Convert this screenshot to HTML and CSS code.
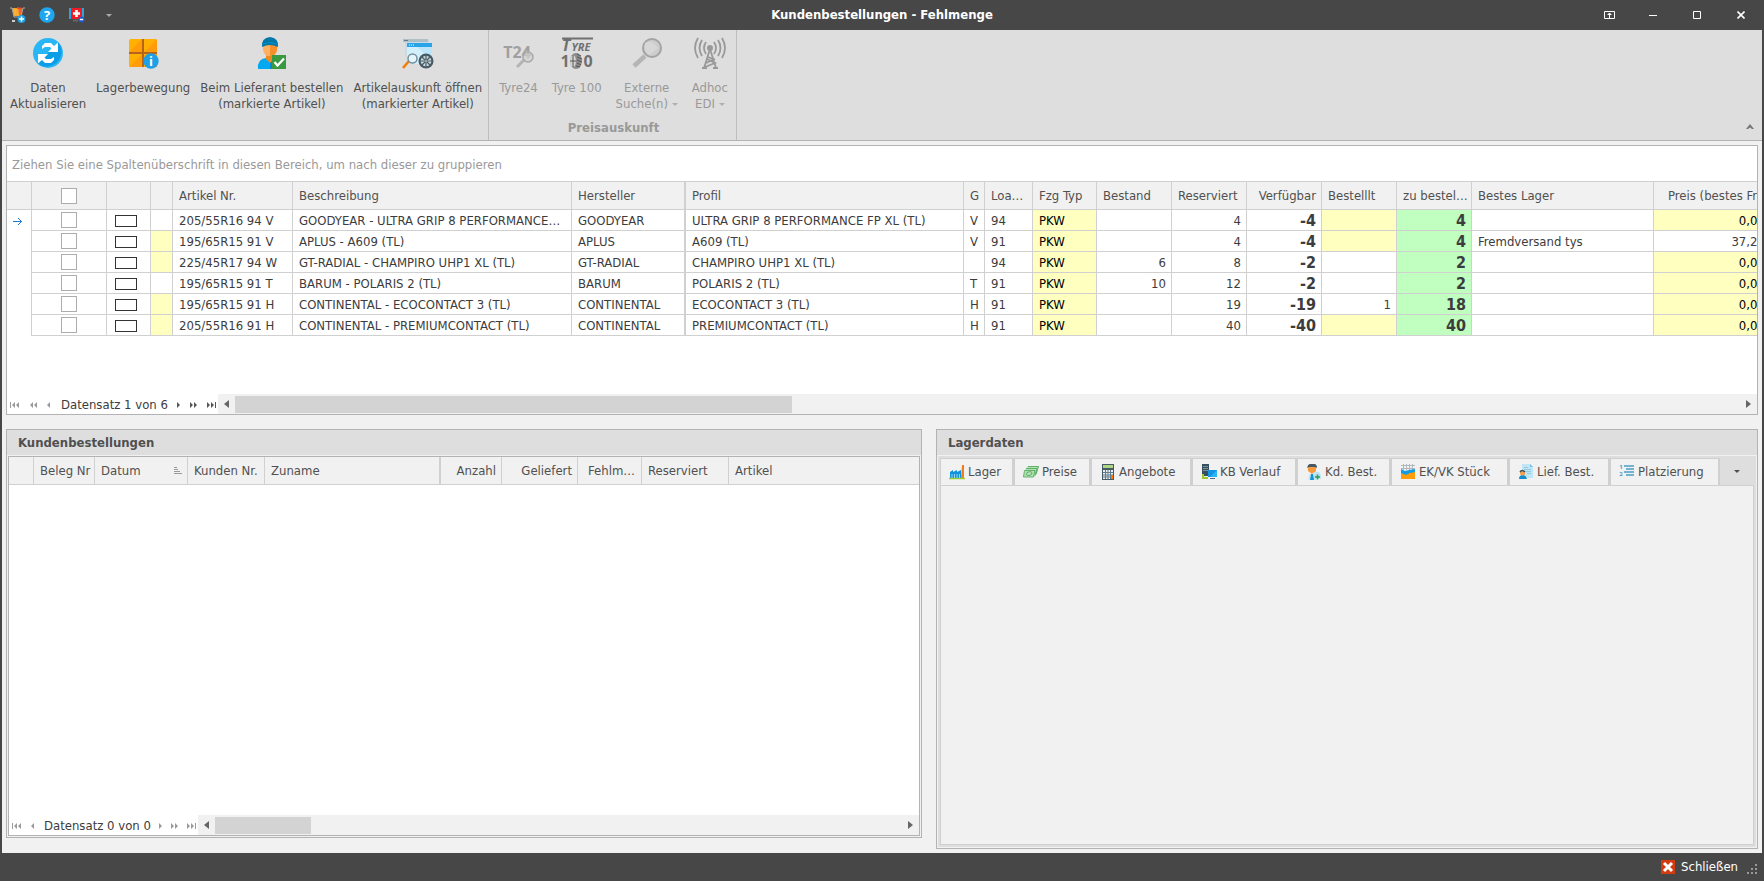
FILE: index.html
```html
<!DOCTYPE html>
<html lang="de">
<head>
    <meta charset="UTF-8">
    <meta name="viewport" content="width=device-width, initial-scale=1.0">
    <title>Kundenbestellungen - Fehlmenge</title>
    <link rel="stylesheet" href="styles.css">
</head>
<body>
    <header class="titlebar">
        <div class="quick-access">
            <button type="button" aria-label="Warenkorb">
                <svg width="16" height="16" viewBox="0 0 16 16"><path d="M2 1h10l-2 8H4z" fill="#f5a01a"/><path d="M7 0l6 1-1 7H9z" fill="#e8481c"/><path d="M3 3h9M3 5h8M4 7h7M5 2v7M8 2v7" stroke="#ffc95a" stroke-width=".5"/><path d="M0 1h2l2 9h6M15 1h-2l-2 8" stroke="#aaa" fill="none"/><path d="M2 14h3" stroke="#ccc" stroke-width="2"/><circle cx="11.500" cy="12" r="4" fill="#1ba1e6"/><path d="M9 12h5M11.500 9.500v5" stroke="#fff" stroke-width="1.500"/></svg>
            </button>
            <button type="button" aria-label="Hilfe">
                <svg width="16" height="16" viewBox="0 0 16 16"><circle cx="8" cy="8" r="7.700" fill="#1ea7ee"/><text x="8" y="13" class="glyph" font-size="13" fill="#fff">?</text></svg>
            </button>
            <button type="button" aria-label="Fernwartung">
                <svg width="17" height="16" viewBox="0 0 17 16"><rect x="1" y="1" width="15" height="11" fill="#2aa3e0"/><rect x="3" y="1" width="11" height="11" fill="#f01c24"/><path d="M8.500 3v7M5 6.500h7" stroke="#fff" stroke-width="2.600"/><path d="M5 13.500h5" stroke="#666" stroke-width="2"/><circle cx="13.500" cy="12.500" r="3" fill="#2458c8"/><path d="M11.800 12.500h3.400" stroke="#fff" stroke-width="1.400"/></svg>
            </button>
            <button type="button" class="quick-more" aria-label="Symbolleiste anpassen"><i class="arrow-down"></i></button>
        </div>
        <h1>Kundenbestellungen - Fehlmenge</h1>
        <div class="window-buttons">
            <button type="button" aria-label="Menüband anzeigen"><svg width="11" height="8" viewBox="0 0 11 8"><path d="M.5.5h10v7H.5zM5.500 7V3M3.500 3.500h4M4.500 2.500h2" fill="none" stroke="#fff"/></svg></button>
            <button type="button" aria-label="Minimieren"><svg width="8" height="8" viewBox="0 0 8 8"><path d="M0 4.500h8" stroke="#fff"/></svg></button>
            <button type="button" aria-label="Maximieren"><svg width="8" height="8" viewBox="0 0 8 8"><path d="M.5.500h7v7h-7z" fill="none" stroke="#fff"/></svg></button>
            <button type="button" aria-label="Schließen"><svg width="8" height="8" viewBox="0 0 8 8"><path d="M.5.500l7 7M7.500.500l-7 7" stroke="#fff" stroke-width="1.600"/></svg></button>
        </div>
    </header>

    <div class="ribbon">
        <div class="ribbon-group">
            <div class="ribbon-items">
                <button type="button">
                    <svg width="32" height="32" viewBox="0 0 32 32"><circle cx="16" cy="16" r="15" fill="#29b6f6"/><path d="M26.500 5.500A15 15 0 0 1 5.500 26.500z" fill="#0d9de6"/><path d="M10 12V9l3-3h6l3 3 4-3.500v9.500H16l3.500-3.500-1.500-1.500h-5z" fill="#fff"/><path d="M22 20v3l-3 3h-6l-3-3-4 3.500V17h10l-3.500 3.500 1.500 1.500h5z" fill="#fff"/></svg>
                    <span>Daten<br>Aktualisieren</span>
                </button>
                <button type="button">
                    <svg width="32" height="32" viewBox="0 0 32 32"><rect x="2" y="2" width="28" height="28" rx="2" fill="#ffb000"/><path d="M15 2v13H2zM30 2v13H17zM15 17v13H2zM30 17v13H17z" fill="#ff9c07"/><path d="M16 2v28M2 16h28" stroke="#b5641c" stroke-width="2"/><circle cx="24" cy="24" r="7.700" fill="#1e9fe8"/><text x="24" y="29" class="glyph" font-size="13" fill="#fff">i</text></svg>
                    <span>Lagerbewegung</span>
                </button>
                <button type="button">
                    <svg width="32" height="32" viewBox="0 0 32 32"><path d="M2 32q-1-10 8-11l4 3 4-3q7 0 8 6v5z" fill="#03a9f0"/><path d="M14 24l4-3q7 0 8 6v5H14z" fill="#0288d1"/><path d="M10 17h8v5l-4 4-4-4z" fill="#f08a20"/><path d="M7 8h14q1 8-4 11h-6Q6 16 7 8z" fill="#ffb060"/><path d="M14 8h7q1 8-4 11h-3z" fill="#f7902a"/><path d="M6 10Q5 1 14 0q9 1 8 10-8-4-16 0z" fill="#0277a8"/><path d="M7 7q7-3 14 0" stroke="#0091c9" fill="none"/><rect x="16" y="18" width="14" height="14" fill="#3a9a42"/><path d="M18.500 25l3 3.500 6.500-7" fill="none" stroke="#fff" stroke-width="2.200"/></svg>
                    <span>Beim Lieferant bestellen<br>(markierte Artikel)</span>
                </button>
                <button type="button">
                    <svg width="32" height="32" viewBox="0 0 32 32"><path d="M1 2h26v18H3V5H1z" fill="#c9dce5"/><path d="M1 2h25v3H1z" fill="#aebfc8"/><path d="M2 3.500h4" stroke="#607d8b"/><rect x="5" y="6" width="25" height="21" fill="#d2effc"/><path d="M5 6h25v4H5z" fill="#2aa3e8"/><path d="M7 8h5" stroke="#fff" stroke-dasharray="1 1"/><path d="M15 10h15v14z" fill="#bde5f8"/><path d="M1 31l6-7" stroke="#f57c00" stroke-width="2.600"/><circle cx="10.500" cy="21.500" r="4.500" fill="#e4f5fc" stroke="#78909c" stroke-width="1.500"/><circle cx="24" cy="24" r="7.500" fill="#455a64"/><circle cx="24" cy="24" r="5.300" fill="#cfd8dc"/><path d="M24 18.500v11M18.500 24h11M20 20l8 8M28 20l-8 8" stroke="#455a64" stroke-width="1.200"/><circle cx="24" cy="24" r="1.600" fill="#90a4ae"/></svg>
                    <span>Artikelauskunft öffnen<br>(markierter Artikel)</span>
                </button>
            </div>
        </div>
        <div class="ribbon-group prices">
            <div class="ribbon-items">
                <button type="button" disabled>
                    <svg width="32" height="32" viewBox="0 0 32 32"><text x="15" y="21" class="glyph" font-size="16" fill="#a0a0a0">T24</text><path d="M15 30l7-7" stroke="#b4b4b4" stroke-width="3"/><circle cx="26" cy="20" r="5" fill="#d0d0d0" fill-opacity=".7" stroke="#a8a8a8" stroke-width="1.500"/></svg>
                    <span>Tyre24</span>
                </button>
                <button type="button" disabled>
                    <svg width="32" height="32" viewBox="0 0 32 32"><path d="M1 1.500h31" stroke="#707070" stroke-width="2"/><text x="5" y="14" class="glyph italic" font-size="16" fill="#707070">T</text><text x="20" y="14" class="glyph italic" font-size="11" fill="#707070">YRE</text><text x="4" y="30" class="glyph" font-size="16" fill="#707070">1</text><text x="27" y="30" class="glyph" font-size="16" fill="#707070">0</text><ellipse cx="15" cy="24" rx="6" ry="8" fill="#8c8c8c"/><ellipse cx="12" cy="24" rx="3" ry="6" fill="#d5d5d5"/><path d="M16 17l4 2M16 20l5 2M16 23l5 2M16 26l4 2M15 29l4 1M12 18v12M9 24h6" stroke="#555"/></svg>
                    <span>Tyre 100</span>
                </button>
                <button type="button" disabled>
                    <svg width="32" height="32" viewBox="0 0 32 32"><path d="M3 29l11-10" stroke="#b5b5b5" stroke-width="4.500"/><circle cx="21" cy="11" r="9" fill="#cdcdcd" stroke="#a3a3a3" stroke-width="2"/><path d="M14 6q6-4 13 5-5 3-8 7-7-3-5-12z" fill="#d7d7d7"/></svg>
                    <span>Externe<br>Suche(n) <i class="arrow-down"></i></span>
                </button>
                <button type="button" disabled>
                    <svg width="32" height="32" viewBox="0 0 32 32"><g fill="none" stroke="#999" stroke-width="1.800"><path d="M4 1q-6 10 0 20M8 3q-5 8 0 16M12 5q-4 6 0 12M28 1q6 10 0 20M24 3q5 8 0 16M20 5q4 6 0 12"/><path d="M16 12L10 31M16 12l6 19M13 22l8 4-10 4M19 22l-5-2M8 31h5M19 31h5M12 26l9-4"/></g><circle cx="16" cy="11" r="3" fill="#999"/></svg>
                    <span>Adhoc<br>EDI <i class="arrow-down"></i></span>
                </button>
            </div>
            <div class="ribbon-title">Preisauskunft</div>
        </div>
        <button type="button" class="ribbon-collapse" aria-label="Menüband minimieren"><svg width="8" height="5" viewBox="0 0 8 5"><path d="M0 5l4-5 4 5H6L4 3.500 2 5z" fill="#777"/></svg></button>
    </div>

    <main class="content">
        <section class="grid-panel">
            <div class="group-hint">Ziehen Sie eine Spaltenüberschrift in diesen Bereich, um nach dieser zu gruppieren</div>
            <div class="grid-body">
                <table class="grid articles">
                    <colgroup>
                        <col class="w-ind"><col class="w-75"><col class="w-flag"><col class="w-mark"><col class="w-nr"><col class="w-desc"><col class="w-maker"><col class="w-profile"><col class="w-g"><col class="w-load"><col class="w-type"><col class="w-75"><col class="w-75"><col class="w-75"><col class="w-75"><col class="w-75"><col class="w-stock"><col class="w-price">
                    </colgroup>
                    <thead>
                        <tr>
                            <th></th>
                            <th class="center"><input type="checkbox" aria-label="Alle markieren"></th>
                            <th></th>
                            <th></th>
                            <th>Artikel Nr.</th>
                            <th>Beschreibung</th>
                            <th class="fixed">Hersteller</th>
                            <th>Profil</th>
                            <th>G</th>
                            <th class="load">Loadindex</th>
                            <th>Fzg Typ</th>
                            <th>Bestand</th>
                            <th>Reserviert</th>
                            <th class="num">Verfügbar</th>
                            <th>Bestelllt</th>
                            <th>zu bestellen</th>
                            <th>Bestes Lager</th>
                            <th class="price-head">Preis (bestes Fremdlager)</th>
                        </tr>
                    </thead>
                    <tbody>
                        <tr>
                            <td class="indicator"><svg width="10" height="9" viewBox="0 0 10 9"><path d="M0 4.500h8.500M5 1l3.500 3.500L5 8" fill="none" stroke="#1c78d8"/></svg></td>
                            <td class="center"><input type="checkbox" aria-label="Artikel markieren"></td>
                            <td><span class="flag"></span></td>
                            <td></td>
                            <td>205/55R16 94 V</td>
                            <td class="desc">GOODYEAR - ULTRA GRIP 8 PERFORMANCE FP XL (TL)</td>
                            <td class="fixed">GOODYEAR</td>
                            <td>ULTRA GRIP 8 PERFORMANCE FP XL (TL)</td>
                            <td>V</td>
                            <td>94</td>
                            <td class="yellow">PKW</td>
                            <td class="num"></td>
                            <td class="num">4</td>
                            <td class="big">-4</td>
                            <td class="num yellow"></td>
                            <td class="big green">4</td>
                            <td></td>
                            <td class="price yellow">0,00 €</td>
                        </tr>
                        <tr>
                            <td class="indicator"></td>
                            <td class="center"><input type="checkbox" aria-label="Artikel markieren"></td>
                            <td><span class="flag"></span></td>
                            <td class="yellow"></td>
                            <td>195/65R15 91 V</td>
                            <td class="desc">APLUS - A609 (TL)</td>
                            <td class="fixed">APLUS</td>
                            <td>A609 (TL)</td>
                            <td>V</td>
                            <td>91</td>
                            <td class="yellow">PKW</td>
                            <td class="num"></td>
                            <td class="num">4</td>
                            <td class="big">-4</td>
                            <td class="num yellow"></td>
                            <td class="big green">4</td>
                            <td>Fremdversand tys</td>
                            <td class="price">37,20 €</td>
                        </tr>
                        <tr>
                            <td class="indicator"></td>
                            <td class="center"><input type="checkbox" aria-label="Artikel markieren"></td>
                            <td><span class="flag"></span></td>
                            <td class="yellow"></td>
                            <td>225/45R17 94 W</td>
                            <td class="desc">GT-RADIAL - CHAMPIRO UHP1 XL (TL)</td>
                            <td class="fixed">GT-RADIAL</td>
                            <td>CHAMPIRO UHP1 XL (TL)</td>
                            <td></td>
                            <td>94</td>
                            <td class="yellow">PKW</td>
                            <td class="num">6</td>
                            <td class="num">8</td>
                            <td class="big">-2</td>
                            <td class="num"></td>
                            <td class="big green">2</td>
                            <td></td>
                            <td class="price yellow">0,00 €</td>
                        </tr>
                        <tr>
                            <td class="indicator"></td>
                            <td class="center"><input type="checkbox" aria-label="Artikel markieren"></td>
                            <td><span class="flag"></span></td>
                            <td></td>
                            <td>195/65R15 91 T</td>
                            <td class="desc">BARUM - POLARIS 2 (TL)</td>
                            <td class="fixed">BARUM</td>
                            <td>POLARIS 2 (TL)</td>
                            <td>T</td>
                            <td>91</td>
                            <td class="yellow">PKW</td>
                            <td class="num">10</td>
                            <td class="num">12</td>
                            <td class="big">-2</td>
                            <td class="num"></td>
                            <td class="big green">2</td>
                            <td></td>
                            <td class="price yellow">0,00 €</td>
                        </tr>
                        <tr>
                            <td class="indicator"></td>
                            <td class="center"><input type="checkbox" aria-label="Artikel markieren"></td>
                            <td><span class="flag"></span></td>
                            <td class="yellow"></td>
                            <td>195/65R15 91 H</td>
                            <td class="desc">CONTINENTAL - ECOCONTACT 3 (TL)</td>
                            <td class="fixed">CONTINENTAL</td>
                            <td>ECOCONTACT 3 (TL)</td>
                            <td>H</td>
                            <td>91</td>
                            <td class="yellow">PKW</td>
                            <td class="num"></td>
                            <td class="num">19</td>
                            <td class="big">-19</td>
                            <td class="num">1</td>
                            <td class="big green">18</td>
                            <td></td>
                            <td class="price yellow">0,00 €</td>
                        </tr>
                        <tr>
                            <td class="indicator"></td>
                            <td class="center"><input type="checkbox" aria-label="Artikel markieren"></td>
                            <td><span class="flag"></span></td>
                            <td class="yellow"></td>
                            <td>205/55R16 91 H</td>
                            <td class="desc">CONTINENTAL - PREMIUMCONTACT (TL)</td>
                            <td class="fixed">CONTINENTAL</td>
                            <td>PREMIUMCONTACT (TL)</td>
                            <td>H</td>
                            <td>91</td>
                            <td class="yellow">PKW</td>
                            <td class="num"></td>
                            <td class="num">40</td>
                            <td class="big">-40</td>
                            <td class="num yellow"></td>
                            <td class="big green">40</td>
                            <td></td>
                            <td class="price yellow">0,00 €</td>
                        </tr>
                    </tbody>
                </table>
            </div>
            <div class="navigator">
                <div class="nav-buttons">
                    <button type="button" aria-label="Erster" disabled><svg width="10" height="8" viewBox="0 0 10 8"><path d="M0 1h1v6H0zM5 1v6L2 4zM9 1v6L6 4z"/></svg></button>
                    <button type="button" aria-label="Vorherige Seite" disabled><svg width="8" height="8" viewBox="0 0 8 8"><path d="M4 1v6L1 4zM8 1v6L5 4z"/></svg></button>
                    <button type="button" aria-label="Vorheriger" disabled><svg width="4" height="8" viewBox="0 0 4 8"><path d="M4 1v6L1 4z"/></svg></button>
                    <span>Datensatz 1 von 6</span>
                    <button type="button" aria-label="Nächster"><svg width="4" height="8" viewBox="0 0 4 8"><path d="M0 1v6l3-3z"/></svg></button>
                    <button type="button" aria-label="Nächste Seite"><svg width="8" height="8" viewBox="0 0 8 8"><path d="M0 1v6l3-3zM4 1v6l3-3z"/></svg></button>
                    <button type="button" aria-label="Letzter"><svg width="10" height="8" viewBox="0 0 10 8"><path d="M0 1v6l3-3zM4 1v6l3-3zM8 1h1v6H8z"/></svg></button>
                </div>
                <div class="scrollbar">
                    <i class="arrow-left"></i>
                    <div class="track"><div class="thumb thumb-articles"></div></div>
                    <i class="arrow-right"></i>
                </div>
            </div>
        </section>

        <div class="details">
            <section class="panel orders">
                <h2>Kundenbestellungen</h2>
                <div class="grid-frame">
                    <div class="grid-body">
                        <table class="grid order-grid">
                            <colgroup>
                                <col class="w-row"><col class="w-doc"><col class="w-date"><col class="w-customer"><col class="w-name"><col class="w-count"><col class="w-given"><col class="w-missing"><col class="w-reserved"><col>
                            </colgroup>
                            <thead>
                                <tr>
                                    <th></th>
                                    <th>Beleg Nr</th>
                                    <th><div class="sorted">Datum<svg width="8" height="8" viewBox="0 0 8 8"><path d="M0 .5h3M0 2.500h4M0 4.500h6M0 6.500h8" stroke="#999"/></svg></div></th>
                                    <th>Kunden Nr.</th>
                                    <th class="fixed">Zuname</th>
                                    <th class="num">Anzahl</th>
                                    <th class="num">Geliefert</th>
                                    <th class="missing">Fehlmenge</th>
                                    <th>Reserviert</th>
                                    <th>Artikel</th>
                                </tr>
                            </thead>
                        </table>
                    </div>
                    <div class="navigator">
                        <div class="nav-buttons">
                            <button type="button" aria-label="Erster" disabled><svg width="10" height="8" viewBox="0 0 10 8"><path d="M0 1h1v6H0zM5 1v6L2 4zM9 1v6L6 4z"/></svg></button>
                            <button type="button" aria-label="Vorheriger" disabled><svg width="4" height="8" viewBox="0 0 4 8"><path d="M4 1v6L1 4z"/></svg></button>
                            <span>Datensatz 0 von 0</span>
                            <button type="button" aria-label="Nächster" disabled><svg width="4" height="8" viewBox="0 0 4 8"><path d="M0 1v6l3-3z"/></svg></button>
                            <button type="button" aria-label="Nächste Seite" disabled><svg width="8" height="8" viewBox="0 0 8 8"><path d="M0 1v6l3-3zM4 1v6l3-3z"/></svg></button>
                            <button type="button" aria-label="Letzter" disabled><svg width="10" height="8" viewBox="0 0 10 8"><path d="M0 1v6l3-3zM4 1v6l3-3zM8 1h1v6H8z"/></svg></button>
                        </div>
                        <div class="scrollbar">
                            <i class="arrow-left"></i>
                            <div class="track"><div class="thumb thumb-orders"></div></div>
                            <i class="arrow-right"></i>
                        </div>
                    </div>
                </div>
            </section>

            <section class="panel">
                <h2>Lagerdaten</h2>
                <div class="tab-area">
                    <div class="tabs" role="tablist">
                        <button type="button" role="tab" class="tab-lager">
                            <svg width="16" height="16" viewBox="0 0 16 16"><path d="M12 14l1-13h2v13z" fill="#f57c1a"/><path d="M1 14V8l3-2v2l4-2v2l4-2v8z" fill="#0f93dc"/><path d="M3 14v-4M5.500 14v-4M8 14v-4M10.500 14v-4" stroke="#8fd6fa"/><path d="M0 14.500h16" stroke="#9ccc3c" stroke-width="1.500"/></svg>Lager</button>
                        <button type="button" role="tab" class="tab-preise">
                            <svg width="16" height="16" viewBox="0 0 16 16"><path d="M5 2h11l-2 8-3 3H0l2-7z" fill="#b4e0b6"/><path d="M5 2.500h10.500L13 10M3 4.500h11l-2 7M1.500 6.500H12L10.500 13H.5zM4 8.500q4-2 5 0 0 3-3 3-4 0-2-3" fill="none" stroke="#4ca455" stroke-width=".8"/></svg>Preise</button>
                        <button type="button" role="tab" class="tab-angebote">
                            <svg width="16" height="16" viewBox="0 0 16 16"><rect x="2" y="0" width="12" height="16" fill="#455a64"/><path d="M3 1h10v3H3z" fill="#aed581"/><path d="M3 6h10v9H3z" fill="#eceff1"/><path d="M5.500 6v9M8 6v9M10.500 6v9M3 8.500h10M3 11h10M3 13h10" stroke="#607d8b"/><path d="M11 11h2v4h-2z" fill="#f57c00"/></svg>Angebote</button>
                        <button type="button" role="tab" class="tab-verlauf">
                            <svg width="16" height="16" viewBox="0 0 16 16"><path d="M1 0h7v12H1z" fill="#37505e"/><path d="M2 2.500h5M2 4.500h5M2 6.500h5" stroke="#78909c"/><path d="M2 10v4h5" fill="none" stroke="#9ccc2c" stroke-width="2"/><path d="M7 6h9v7H7z" fill="#1596e4"/><path d="M16 6v7H9z" fill="#29b6f6"/><path d="M9 14.500h5" stroke="#546e7a"/></svg>KB Verlauf</button>
                        <button type="button" role="tab" class="tab-kunden">
                            <svg width="16" height="16" viewBox="0 0 16 16"><path d="M2 16l1-6h6l2 6z" fill="#d5e8ef"/><path d="M5 10h2l1 6H4z" fill="#1593d8"/><path d="M2 2h8v5L6 10 2 7z" fill="#f99a3c"/><path d="M1 4q1-5 5-4 5-1 5 4L9 3H3z" fill="#465962"/><path d="M8 8h5l2 3v4H8z" fill="#bde4f4"/><path d="M9 13h5M11.500 10.500v5" stroke="#2e9d4d" stroke-width="1.500"/></svg>Kd. Best.</button>
                        <button type="button" role="tab" class="tab-ekvk">
                            <svg width="16" height="16" viewBox="0 0 16 16"><path d="M1 1.500h14M1 4.500h14M3.500 0v6M6.500 0v6M9.500 0v6M12.500 0v6" stroke="#b0b8bc"/><path d="M1 5l4 2 4-1 6-1v6H1z" fill="#149be5"/><path d="M1 9l5 2 4-2 5-1v7H1z" fill="#ff9d0a"/></svg>EK/VK Stück</button>
                        <button type="button" role="tab" class="tab-lieferant">
                            <svg width="16" height="16" viewBox="0 0 16 16"><path d="M4 0h8l3 3v11H4z" fill="#c2e5f5"/><path d="M12 0l3 3h-3z" fill="#78bfe0"/><path d="M6 3.500h4M6 5.500h7M8 7.500h5M9 9.500h4" stroke="#91cbe5"/><path d="M1 15q0-4 4-4 3 0 4 4z" fill="#158bd0"/><circle cx="4.500" cy="9" r="2.500" fill="#f7a04a"/><path d="M2 8q2-3 5 0" stroke="#37505e" stroke-width="1.500" fill="none"/></svg>Lief. Best.</button>
                        <button type="button" role="tab" class="tab-platz">
                            <svg width="16" height="16" viewBox="0 0 16 16"><path d="M5 2h10M7 5h8M5 8h10M7 11h8" stroke="#72b3d1" stroke-width="1.800"/><text x="2" y="5" class="glyph" font-size="6" fill="#4c9fc8">1</text><text x="2" y="12" class="glyph" font-size="6" fill="#4c9fc8">2</text></svg>Platzierung</button>
                        <button type="button" class="tab-more" aria-label="Weitere Register"><i class="arrow-down"></i></button>
                    </div>
                    <div class="tab-page"></div>
                </div>
            </section>
        </div>
    </main>

    <footer class="statusbar">
        <button type="button">
            <svg width="14" height="14" viewBox="0 0 14 14"><path d="M0 0h14v14H0z" fill="#d23c10"/><path d="M3 3l8 8M11 3l-8 8" stroke="#fff" stroke-width="3"/></svg>
            Schließen
        </button>
        <svg class="grip" width="10" height="10" viewBox="0 0 10 10"><path d="M8 0h2v2H8zM4 4h2v2H4zM8 4h2v2H8zM0 8h2v2H0zM4 8h2v2H4zM8 8h2v2H8z" fill="#999"/></svg>
    </footer>
</body>
</html>
```
FILE: styles.css
```css
* {
    box-sizing: border-box;
}
body {
    margin: 0;
    height: 100vh;
    display: flex;
    flex-direction: column;
    overflow: hidden;
    background-color: #474747;
    color: #3c3c3c;
    font-family: "DejaVu Sans Condensed", "DejaVu Sans", Tahoma, sans-serif;
    font-size: 13px;
    line-height: 16px;
}
button {
    margin: 0;
    padding: 0;
    border: none;
    background: none;
    color: inherit;
    font: inherit;
}
svg {
    display: block;
    flex: none;
}
.glyph {
    font-family: "Open Sans", sans-serif;
    font-weight: bold;
    text-anchor: middle;
}
.italic {
    font-style: italic;
}

/* small triangles */
.arrow-down,
.arrow-left,
.arrow-right {
    display: inline-block;
    flex: none;
    border: 3px solid transparent;
}
.arrow-down {
    border-top-color: currentColor;
    border-bottom: none;
}
.arrow-left {
    border-width: 4px;
    border-right: 5px solid #666;
    border-left: none;
}
.arrow-right {
    border-width: 4px;
    border-left: 5px solid #666;
    border-right: none;
}

/* title bar */
.titlebar {
    display: grid;
    grid-template-columns: 1fr auto 1fr;
    align-items: center;
    height: 30px;
    flex: none;
    color: #fff;
}
.titlebar h1 {
    margin: 0;
    font-size: 13px;
}
.quick-access {
    display: flex;
    align-items: center;
    gap: 13px;
    padding-left: 10px;
}
.quick-more {
    display: flex;
    padding-left: 8px;
    color: #aaa;
}
.window-buttons {
    display: flex;
    justify-content: flex-end;
    padding-right: 1px;
}
.window-buttons button {
    width: 44px;
    height: 30px;
    display: flex;
    align-items: center;
    justify-content: center;
}

/* ribbon */
.ribbon {
    display: flex;
    flex: none;
    height: 111px;
    margin: 0 2px;
    background-color: #dedede;
    border-bottom: 1px solid #b3b3b3;
    color: #505050;
}
.ribbon-group {
    display: flex;
    flex-direction: column;
    justify-content: space-between;
    padding: 7px 1px 4px 3px;
    border-right: 1px solid #bdbdbd;
}
.ribbon-items {
    display: flex;
    align-items: flex-start;
}
.ribbon-items button {
    display: flex;
    flex-direction: column;
    align-items: center;
    gap: 11px;
    padding: 0 5px;
}
.prices button {
    padding: 0 7px;
}
.ribbon-items button:disabled,
.ribbon-title {
    color: #999;
}
.ribbon-items .arrow-down {
    vertical-align: middle;
    border-top-color: #b0b0b0;
}
.ribbon-title {
    text-align: center;
    font-weight: bold;
}
.ribbon-collapse {
    display: flex;
    align-self: flex-end;
    margin-left: auto;
    padding: 0 8px 11px;
}

.content {
    flex: 1;
    min-height: 0;
    display: grid;
    grid-template-rows: 9fr 14fr;
    gap: 14px;
    margin: 0 2px;
    padding: 4px;
    background-color: #f1f1f1;
}
.grid-panel {
    display: flex;
    flex-direction: column;
    min-width: 0;
    min-height: 0;
    border: 1px solid #b3b3b3;
    background-color: #fff;
}
.group-hint {
    padding: 11px 5px 8px;
    border-bottom: 1px solid #d0d0d0;
    color: #999;
}
.grid-body {
    flex: 1;
    min-height: 0;
    overflow: hidden;
}

/* data grids */
.grid {
    table-layout: fixed;
    border-collapse: separate;
    border-spacing: 0;
}
.articles {
    width: 1797px;
}
.order-grid {
    width: 100%;
}
.grid th,
.grid td {
    height: 21px;
    padding: 1px 5px 0 6px;
    border-right: 1px solid #d0d0d0;
    border-bottom: 1px solid #d0d0d0;
    text-align: left;
    font-weight: normal;
    white-space: nowrap;
    overflow: hidden;
    text-overflow: ellipsis;
}
.grid th {
    height: 28px;
    padding: 0 1px 0 6px;
    background-color: #f1f1f1;
    color: #505050;
}
.order-grid th:last-child {
    border-right: none;
}
.grid .fixed {
    border-right-width: 2px;
}
.grid .center {
    padding: 0;
    text-align: center;
}
.grid .num {
    padding-right: 5px;
    text-align: right;
}
.grid .load {
    padding-right: 5px;
}
.grid .desc {
    padding-right: 9px;
}
.grid .missing {
    padding-left: 10px;
}
.grid .price-head {
    padding-left: 14px;
    padding-right: 0;
    text-overflow: clip;
}
.grid .price {
    padding-right: 27px;
    text-align: right;
}
.grid .big {
    text-align: right;
    font-size: 16px;
    font-weight: bold;
}
.grid .yellow {
    background-color: #ffffc0;
    color: #000;
}
.grid .green {
    background-color: #c0ffc0;
}
.grid .indicator {
    border-bottom: none;
}
.grid input {
    appearance: none;
    display: block;
    width: 16px;
    height: 16px;
    margin: 0 auto;
    border: 1px solid #acacac;
    background-color: #fff;
}
.flag {
    display: block;
    width: 22px;
    height: 12px;
    margin-left: 2px;
    border: 1px solid #333;
}
.sorted {
    display: flex;
    align-items: center;
    justify-content: space-between;
    padding-right: 4px;
}
.w-ind { width: 25px; }
.w-flag { width: 44px; }
.w-mark { width: 22px; }
.w-nr { width: 120px; }
.w-desc { width: 279px; }
.w-maker { width: 114px; }
.w-profile { width: 278px; }
.w-g { width: 21px; }
.w-load { width: 48px; }
.w-type { width: 64px; }
.w-75 { width: 75px; }
.w-stock { width: 182px; }
.w-price { width: 150px; }
.w-row { width: 25px; }
.w-doc { width: 61px; }
.w-date { width: 93px; }
.w-customer { width: 77px; }
.w-name { width: 176px; }
.w-count { width: 61px; }
.w-given { width: 76px; }
.w-missing { width: 64px; }
.w-reserved { width: 87px; }

/* record navigator and scrollbar */
.navigator {
    display: flex;
    height: 20px;
    flex: none;
}
.nav-buttons {
    display: flex;
    align-items: center;
    gap: 9px;
    padding: 1px 1px 0 3px;
}
.nav-buttons span {
    padding-left: 2px;
}
.orders .nav-buttons {
    gap: 8px;
}
.nav-buttons button {
    fill: #555;
}
.nav-buttons button:disabled {
    fill: #999;
}
.scrollbar {
    flex: 1;
    display: flex;
    align-items: center;
    gap: 6px;
    padding: 0 6px;
    background-color: #f1f1f1;
}
.track {
    flex: 1;
}
.thumb {
    height: 17px;
    background-color: #d3d3d3;
}
.thumb-articles {
    width: 37%;
}
.thumb-orders {
    width: 14%;
}

/* lower panels */
.details {
    display: grid;
    grid-template-columns: 39fr 35fr;
    gap: 14px;
    min-height: 0;
}
.panel {
    display: flex;
    flex-direction: column;
    min-width: 0;
    border: 1px solid #b3b3b3;
}
.panel h2 {
    margin: 0;
    padding: 5px 11px 4px;
    background-color: #dedede;
    color: #505050;
    font-size: 13px;
}
.orders {
    margin-bottom: 11px;
}
.grid-frame {
    flex: 1;
    display: flex;
    flex-direction: column;
    margin: 1px;
    border: 1px solid #b3b3b3;
    background-color: #fff;
}
.tab-area {
    flex: 1;
    display: flex;
    flex-direction: column;
    margin: 1px;
    padding: 2px;
    background-color: #dedede;
}
.tabs {
    display: flex;
    height: 27px;
    color: #505050;
}
.tabs button {
    display: flex;
    align-items: center;
    gap: 3px;
    padding-left: 8px;
    border: 1px solid #d0d0d0;
    border-right-width: 2px;
    border-bottom: none;
    background-color: #f1f1f1;
    white-space: nowrap;
}
.tab-lager { width: 74px; }
.tab-preise { width: 77px; }
.tab-angebote { width: 101px; }
.tab-verlauf { width: 105px; }
.tab-kunden { width: 94px; }
.tab-ekvk { width: 118px; }
.tab-lieferant { width: 101px; }
.tab-platz { width: 110px; }
.tabs .tab-more {
    flex: 1;
    justify-content: center;
    padding: 0;
    border: none;
    background: none;
}
.tab-page {
    flex: 1;
    border: 1px solid #d0d0d0;
    background-color: #f1f1f1;
}

.statusbar {
    display: flex;
    align-items: center;
    justify-content: flex-end;
    gap: 9px;
    height: 28px;
    flex: none;
    padding-right: 7px;
    color: #fff;
}
.statusbar button {
    display: flex;
    align-items: center;
    gap: 6px;
}
.grip {
    align-self: flex-end;
    margin-bottom: 7px;
}
```
